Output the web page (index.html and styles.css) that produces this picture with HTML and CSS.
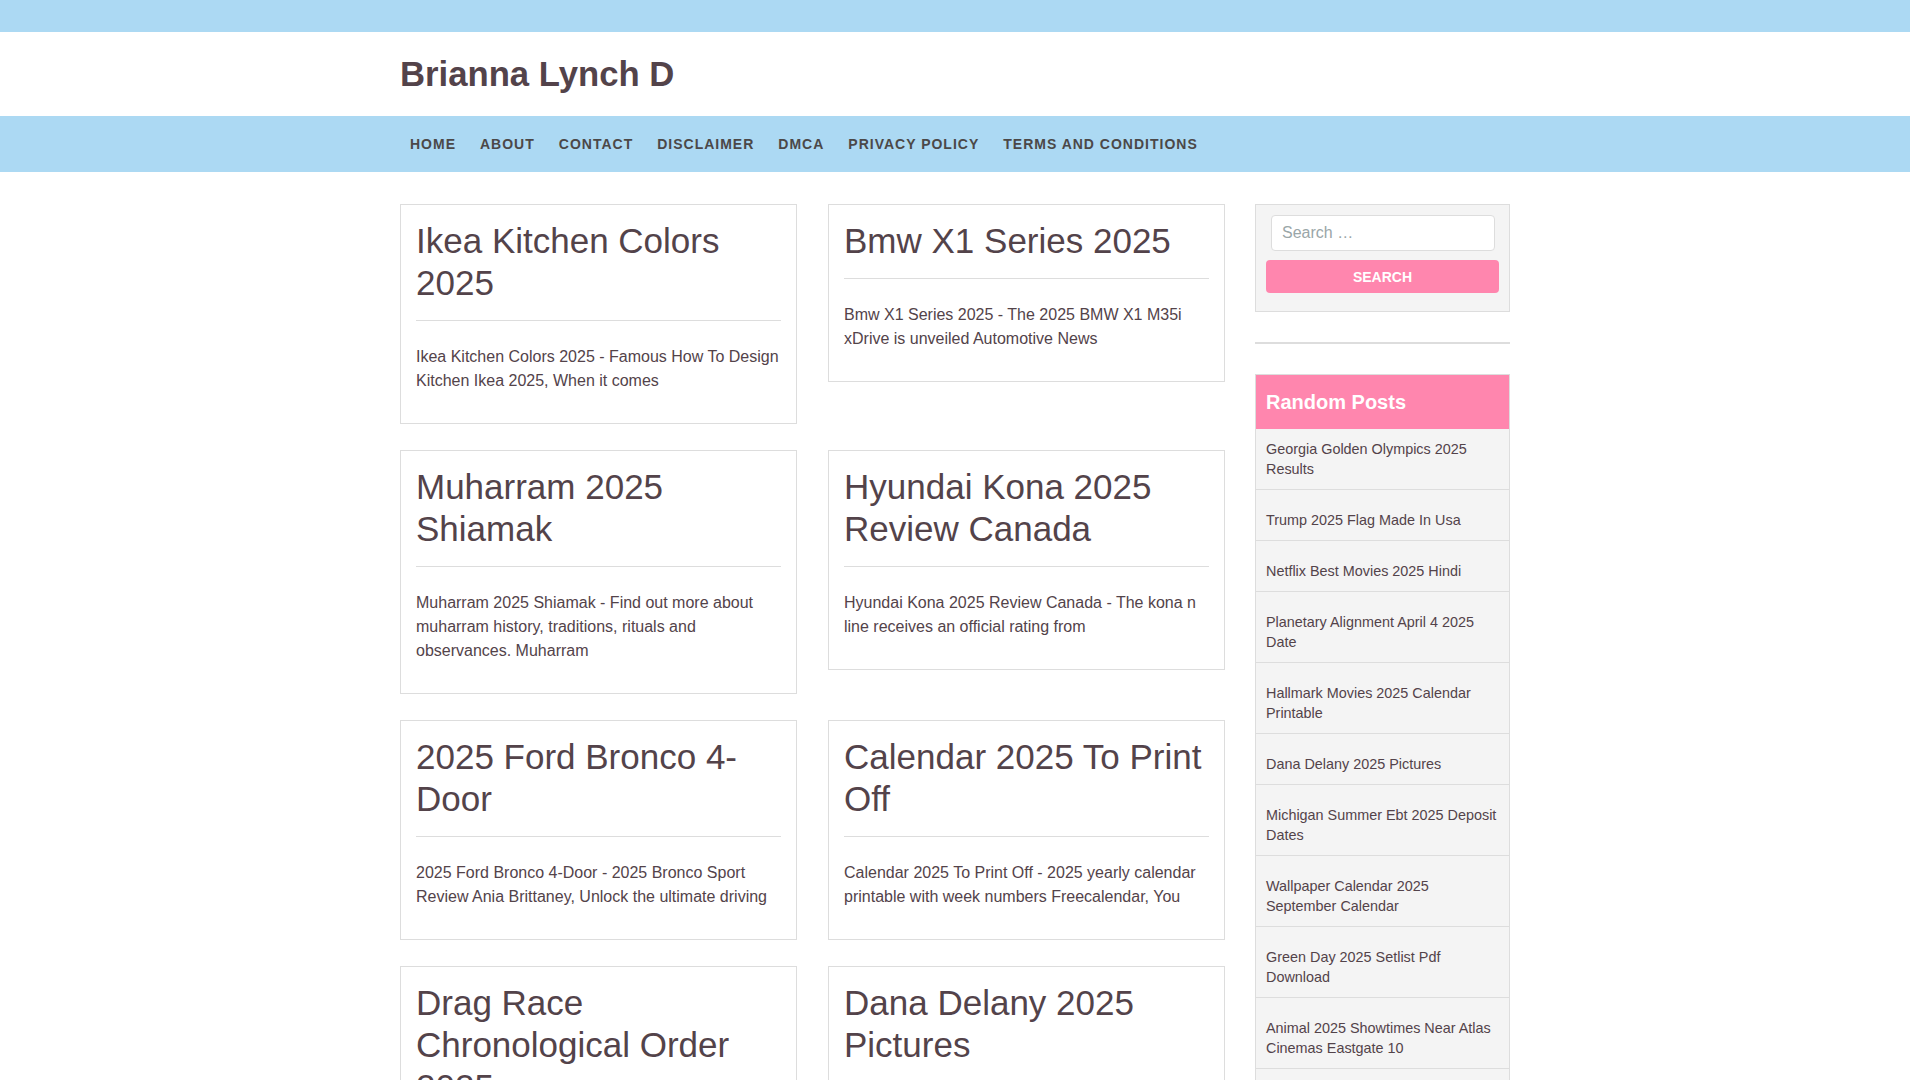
FILE: index.html
```html
<!DOCTYPE html>
<html lang="en">
<head>
<meta charset="utf-8">
<title>Brianna Lynch D</title>
<link rel="stylesheet" href="styles.css">
</head>
<body>
<div class="topbar"></div>
<header class="site-header">
  <div class="container">
    <div class="site-title">Brianna Lynch D</div>
  </div>
</header>
<nav class="main-nav">
  <div class="container">
    <ul class="menu">
      <li><a href="#">Home</a></li>
      <li><a href="#">About</a></li>
      <li><a href="#">Contact</a></li>
      <li><a href="#">Disclaimer</a></li>
      <li><a href="#">DMCA</a></li>
      <li><a href="#">Privacy Policy</a></li>
      <li><a href="#">Terms and Conditions</a></li>
    </ul>
  </div>
</nav>
<div class="container content">
  <main class="posts">
    <article class="card">
      <h2 class="card-title">Ikea Kitchen Colors 2025</h2>
      <hr class="card-rule">
      <p class="card-text">Ikea Kitchen Colors 2025 - Famous How To Design Kitchen Ikea 2025, When it comes</p>
    </article>
    <article class="card">
      <h2 class="card-title">Bmw X1 Series 2025</h2>
      <hr class="card-rule">
      <p class="card-text">Bmw X1 Series 2025 - The 2025 BMW X1 M35i xDrive is unveiled Automotive News</p>
    </article>
    <article class="card">
      <h2 class="card-title">Muharram 2025 Shiamak</h2>
      <hr class="card-rule">
      <p class="card-text">Muharram 2025 Shiamak - Find out more about muharram history, traditions, rituals and observances. Muharram</p>
    </article>
    <article class="card">
      <h2 class="card-title">Hyundai Kona 2025 Review Canada</h2>
      <hr class="card-rule">
      <p class="card-text">Hyundai Kona 2025 Review Canada - The kona n line receives an official rating from</p>
    </article>
    <article class="card">
      <h2 class="card-title">2025 Ford Bronco 4-Door</h2>
      <hr class="card-rule">
      <p class="card-text">2025 Ford Bronco 4-Door - 2025 Bronco Sport Review Ania Brittaney, Unlock the ultimate driving</p>
    </article>
    <article class="card">
      <h2 class="card-title">Calendar 2025 To Print Off</h2>
      <hr class="card-rule">
      <p class="card-text">Calendar 2025 To Print Off - 2025 yearly calendar printable with week numbers Freecalendar, You</p>
    </article>
    <article class="card">
      <h2 class="card-title">Drag Race Chronological Order 2025</h2>
      <hr class="card-rule">
      <p class="card-text">Drag Race Chronological Order 2025 - Every season of the show ranked in order of release, from</p>
    </article>
    <article class="card">
      <h2 class="card-title">Dana Delany 2025 Pictures</h2>
      <hr class="card-rule">
      <p class="card-text">Dana Delany 2025 Pictures - Browse the latest photos of the actress at events and premieres</p>
    </article>
  </main>
  <aside class="sidebar">
    <section class="widget search-widget">
      <form class="search-form">
        <label class="search-label"><input class="search-field" type="search" placeholder="Search …"></label>
        <button class="search-submit" type="button">Search</button>
      </form>
    </section>
    <hr class="sidebar-rule">
    <section class="widget posts-widget">
      <h3 class="widget-title">Random Posts</h3>
      <ul class="post-list">
        <li><a href="#">Georgia Golden Olympics 2025 Results</a></li>
        <li><a href="#">Trump 2025 Flag Made In Usa</a></li>
        <li><a href="#">Netflix Best Movies 2025 Hindi</a></li>
        <li><a href="#">Planetary Alignment April 4 2025 Date</a></li>
        <li><a href="#">Hallmark Movies 2025 Calendar Printable</a></li>
        <li><a href="#">Dana Delany 2025 Pictures</a></li>
        <li><a href="#">Michigan Summer Ebt 2025 Deposit Dates</a></li>
        <li><a href="#">Wallpaper Calendar 2025 September Calendar</a></li>
        <li><a href="#">Green Day 2025 Setlist Pdf Download</a></li>
        <li><a href="#">Animal 2025 Showtimes Near Atlas Cinemas Eastgate 10</a></li>
        <li><a href="#">Calendar 2025 To Print Off</a></li>
      </ul>
    </section>
  </aside>
</div>
</body>
</html>
```

FILE: styles.css
```css
* { box-sizing: border-box; }
html, body { margin: 0; padding: 0; }
body {
  font-family: "Liberation Sans", Arial, sans-serif;
  color: #53434a;
  background: #fff;
  font-size: 16px;
  padding-right: 10px;
}
a { color: inherit; text-decoration: none; }
.container { width: 1110px; margin: 0 auto; }

.topbar { height: 32px; background: #acd9f3; }

.site-header { height: 84px; display: flex; align-items: center; }
.site-title {
  font-size: 34.7px;
  font-weight: 700;
  line-height: 40px;
  color: #53434a;
}

.main-nav { height: 56px; background: #acd9f3; display: flex; align-items: center; }
.menu { list-style: none; margin: 0; padding: 0; display: flex; gap: 4px; }
.menu a {
  display: block;
  padding: 0 10px;
  font-size: 14px;
  font-weight: 700;
  letter-spacing: 1px;
  text-transform: uppercase;
  line-height: 20px;
  color: #4b4848;
}

.content {
  display: flex;
  gap: 30px;
  align-items: flex-start;
  padding-top: 32px;
}
.posts {
  width: 825px;
  display: grid;
  grid-template-columns: 397px 397px;
  column-gap: 31px;
  row-gap: 26px;
  align-items: start;
}
.card {
  border: 1px solid #dddddd;
  padding: 15px 15px 14px;
  background: #fff;
}
.card-title {
  margin: 0 0 16px;
  font-size: 35px;
  line-height: 42px;
  font-weight: 400;
  color: #53434a;
}
.card-rule { border: 0; border-top: 1px solid #dddddd; margin: 0 0 24px; }
.card-text { margin: 0 0 16px; font-size: 16px; line-height: 24px; color: #53434a; }

.sidebar { width: 255px; }
.widget { border: 1px solid #dddddd; background: #f4f4f4; }
.search-widget { padding: 10px 10px 18px; }
.search-form { display: flex; flex-direction: column; }
.search-label { display: block; padding: 0 4px 0 5px; }
.search-field {
  display: block;
  width: 100%;
  height: 36px;
  border: 1px solid #dddddd;
  border-radius: 4px;
  background: #fff;
  padding: 0 10px;
  font-family: "Liberation Sans", Arial, sans-serif;
  font-size: 16px;
  color: #53434a;
  outline: none;
}
.search-field::placeholder { color: #9aa6a8; }
.search-submit {
  margin-top: 9px;
  height: 33px;
  border: 0;
  border-radius: 4px;
  background: #ff86ae;
  color: #fff;
  font-family: "Liberation Sans", Arial, sans-serif;
  font-size: 14px;
  font-weight: 700;
  text-transform: uppercase;
}
.sidebar-rule { border: 0; border-top: 2px solid #dddddd; margin: 30px 0; }

.widget-title {
  margin: 0;
  background: #ff86ae;
  color: #fff;
  font-size: 20px;
  font-weight: 700;
  line-height: 24px;
  padding: 15px 10px;
}
.post-list { list-style: none; margin: 0; padding: 0; }
.post-list li {
  padding: 20px 10px 10px 10px;
  border-bottom: 1px solid #dddddd;
  font-size: 14.4px;
  line-height: 20px;
}
.post-list li:first-child { padding-top: 10px; }
.post-list a { color: #53434a; }
```
